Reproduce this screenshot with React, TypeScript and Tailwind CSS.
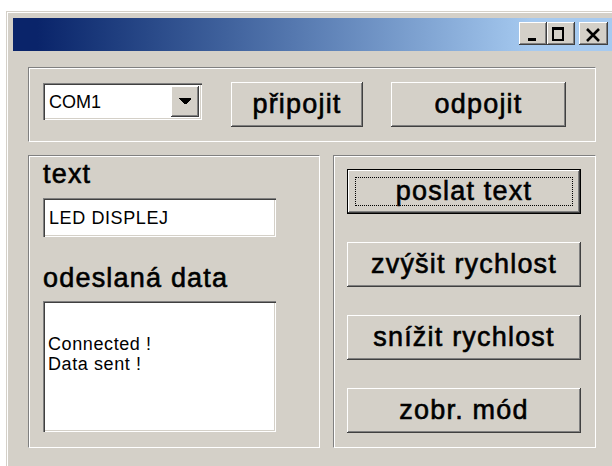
import type { ReactNode } from 'react';

// classic 3D bevels, drawn with inset shadows so the box size stays exact
const RAISED =
  'bg-[#d4d0c8] shadow-[inset_-1px_-1px_0_#404040,inset_1px_1px_0_#ffffff,inset_-2px_-2px_0_#808080]';
const SUNKEN =
  'bg-white shadow-[inset_1px_1px_0_#808080,inset_2px_2px_0_#404040,inset_-1px_-1px_0_#ffffff,inset_-2px_-2px_0_#d4d0c8]';
const ETCHED =
  'border border-t-[#808080] border-l-[#808080] border-r-white border-b-white shadow-[inset_1px_1px_0_#ffffff]';
// big caption font: regular face thickened a little, spaced out like the old bitmap font
const BIG = 'text-[27px] tracking-[1.2px] [-webkit-text-stroke:0.6px_#000]';
const SMALL = 'text-[18px] tracking-[0.6px]';

function CaptionButton({ children, className = '' }: { children: ReactNode; className?: string }) {
  return (
    <div className={`flex h-[23px] w-[28px] items-center justify-center ${RAISED} ${className}`}>
      {children}
    </div>
  );
}

function TitleBar() {
  return (
    <div className="flex h-[33px] items-start justify-end bg-linear-to-r from-[#0a246a] from-[4%] to-[#a6caf0] to-[86%] pr-[9px] pt-[4px]">
      <CaptionButton>
        <svg width="28" height="23" viewBox="0 0 28 23" shapeRendering="crispEdges">
          <rect x="9" y="16" width="8" height="3" fill="#000" />
        </svg>
      </CaptionButton>
      <CaptionButton>
        <svg width="28" height="23" viewBox="0 0 28 23" shapeRendering="crispEdges">
          <rect x="6" y="6" width="10" height="12" fill="none" stroke="#000" strokeWidth="2" />
          <rect x="5" y="5" width="12" height="3" fill="#000" />
        </svg>
      </CaptionButton>
      <CaptionButton className="ml-[4px] w-[29px]">
        <svg width="29" height="23" viewBox="0 0 29 23">
          <path d="M8 7 L20 19 M20 7 L8 19" stroke="#000" strokeWidth="2.6" />
        </svg>
      </CaptionButton>
    </div>
  );
}

function PushButton({ label, width, focused = false }: { label: string; width: string; focused?: boolean }) {
  if (focused) {
    return (
      <div className={`flex h-[45px] ${width} border border-black p-[7px] ${RAISED}`}>
        <div className={`flex flex-1 items-center justify-center border border-dotted border-black leading-none ${BIG}`}>
          {label}
        </div>
      </div>
    );
  }
  return (
    <div className={`flex h-[45px] ${width} items-center justify-center leading-none ${BIG} ${RAISED}`}>
      {label}
    </div>
  );
}

function ComboBox() {
  return (
    <div className={`mt-[1px] flex h-[37px] w-[159px] p-[2px] ${SUNKEN}`}>
      <div className="flex flex-1 items-center pl-[4px] text-[18px] leading-none">COM1</div>
      <div className={`my-[1px] mr-[1px] flex w-[28px] items-center justify-center ${RAISED}`}>
        <svg width="12" height="7" viewBox="0 0 12 7" shapeRendering="crispEdges">
          <polygon points="0,0 12,0 12,1 7,6 5,6 0,1" fill="#000" />
        </svg>
      </div>
    </div>
  );
}

const BUTTONS = ['poslat text', 'zvýšit rychlost', 'snížit rychlost', 'zobr. mód'];

export default function App() {
  return (
    <div className="h-screen overflow-hidden bg-white pl-[6px] pt-[11px] font-['Liberation_Sans',Arial,sans-serif] text-black">
      <div className="h-[470px] w-[616px] border-l border-t border-[#d4d0c8] bg-[#d4d0c8]">
        <div className="h-full border-l border-t border-white px-[5px] pt-[5px]">
          <TitleBar />

          <div className="pl-[15px] pt-[16px]">
            {/* port selection */}
            <div className={`flex h-[75px] w-[568px] items-start pl-[14px] pt-[14px] ${ETCHED}`}>
              <ComboBox />
              <div className="ml-[29px]">
                <PushButton label="připojit" width="w-[132px]" />
              </div>
              <div className="ml-[28px]">
                <PushButton label="odpojit" width="w-[175px]" />
              </div>
            </div>

            <div className="mt-[13px] flex gap-[13px]">
              {/* text to send + log */}
              <div className={`h-[293px] w-[292px] pl-[14px] pt-[3px] ${ETCHED}`}>
                <div className={`leading-[30px] ${BIG}`}>text</div>
                <div className={`mt-[9px] flex h-[39px] w-[233px] items-center pl-[6px] leading-none ${SMALL} ${SUNKEN}`}>
                  LED DISPLEJ
                </div>
                <div className={`mt-[26px] leading-[30px] ${BIG}`}>odeslaná data</div>
                <div className={`mt-[8px] h-[131px] w-[233px] pl-[5px] pt-[33px] leading-[20px] ${SMALL} ${SUNKEN}`}>
                  <div>Connected !</div>
                  <div>Data sent !</div>
                </div>
              </div>

              {/* commands */}
              <div className={`flex h-[293px] w-[263px] flex-col gap-[28px] pl-[13px] pt-[13px] ${ETCHED}`}>
                {BUTTONS.map((b, i) => (
                  <PushButton key={b} label={b} width="w-[234px]" focused={i === 0} />
                ))}
              </div>
            </div>
          </div>
        </div>
      </div>
    </div>
  );
}
